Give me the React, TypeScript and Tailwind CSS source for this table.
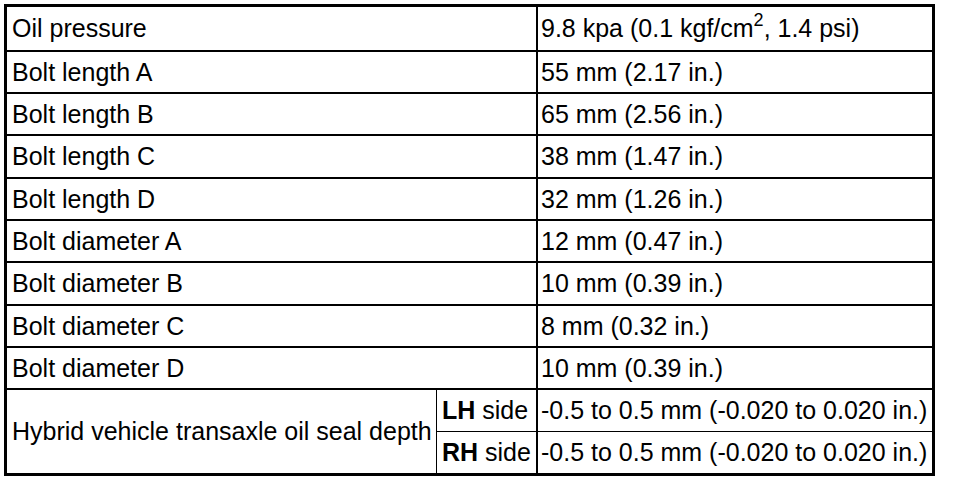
import React from "react";

const rows: [string, React.ReactNode][] = [
  [
    "Oil pressure",
    <>
      9.8 kpa (0.1 kgf/cm<span className="text-[18px] relative -top-[9px] leading-none">2</span>, 1.4 psi)
    </>,
  ],
  ["Bolt length A", "55 mm (2.17 in.)"],
  ["Bolt length B", "65 mm (2.56 in.)"],
  ["Bolt length C", "38 mm (1.47 in.)"],
  ["Bolt length D", "32 mm (1.26 in.)"],
  ["Bolt diameter A", "12 mm (0.47 in.)"],
  ["Bolt diameter B", "10 mm (0.39 in.)"],
  ["Bolt diameter C", "8 mm (0.32 in.)"],
  ["Bolt diameter D", "10 mm (0.39 in.)"],
];

export default function App() {
  return (
    <div
      className="w-[960px] h-[482px] bg-white text-black pt-[4px] pl-[4px]"
      style={{ fontFamily: '"Liberation Sans", Arial, sans-serif' }}
    >
      <div className="w-[931px] border-[3px] border-black text-[25px] leading-none">
        {rows.map(([label, value], i) => (
          <div
            key={i}
            className={`flex border-b-2 border-black ${i === 0 ? "h-[45px]" : i % 3 === 0 ? "h-[43px]" : "h-[42px]"}`}
          >
            <div className="w-[531px] shrink-0 border-r-2 border-black flex items-center pl-[5px]">
              {label}
            </div>
            <div className="flex-1 flex items-center pl-[3px] whitespace-nowrap">{value}</div>
          </div>
        ))}
        <div className="flex h-[83px]">
          <div className="w-[430px] shrink-0 border-r border-black flex items-center pl-[5px] whitespace-nowrap">
            Hybrid vehicle transaxle oil seal depth
          </div>
          <div className="w-[101px] shrink-0 border-r-2 border-black flex flex-col">
            <div className="h-[42px] border-b border-black flex items-center pl-[5px] whitespace-nowrap">
              <span className="font-bold">LH</span>&nbsp;side
            </div>
            <div className="flex-1 flex items-center pl-[5px] whitespace-nowrap">
              <span className="font-bold">RH</span>&nbsp;side
            </div>
          </div>
          <div className="flex-1 flex flex-col">
            <div className="h-[42px] border-b border-black flex items-center pl-[3px] whitespace-nowrap">
              -0.5 to 0.5 mm (-0.020 to 0.020 in.)
            </div>
            <div className="flex-1 flex items-center pl-[3px] whitespace-nowrap">
              -0.5 to 0.5 mm (-0.020 to 0.020 in.)
            </div>
          </div>
        </div>
      </div>
    </div>
  );
}
